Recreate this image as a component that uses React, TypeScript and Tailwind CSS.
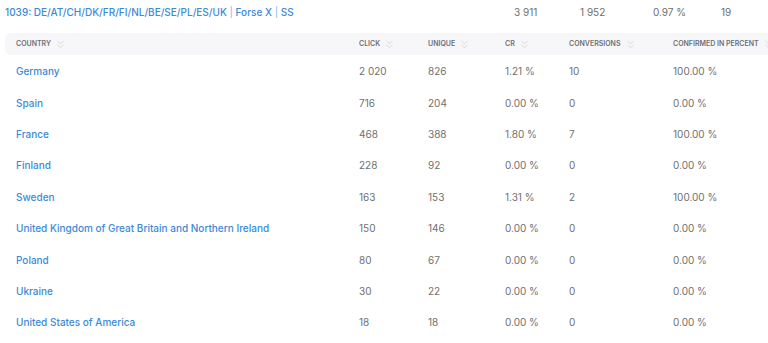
import { ChevronsDown } from 'lucide-react'

interface Row {
  country: string
  click: string
  unique: string
  cr: string
  conv: string
  confirmed: string
}

const rows: Row[] = [
  { country: 'Germany', click: '2 020', unique: '826', cr: '1.21 %', conv: '10', confirmed: '100.00 %' },
  { country: 'Spain', click: '716', unique: '204', cr: '0.00 %', conv: '0', confirmed: '0.00 %' },
  { country: 'France', click: '468', unique: '388', cr: '1.80 %', conv: '7', confirmed: '100.00 %' },
  { country: 'Finland', click: '228', unique: '92', cr: '0.00 %', conv: '0', confirmed: '0.00 %' },
  { country: 'Sweden', click: '163', unique: '153', cr: '1.31 %', conv: '2', confirmed: '100.00 %' },
  { country: 'United Kingdom of Great Britain and Northern Ireland', click: '150', unique: '146', cr: '0.00 %', conv: '0', confirmed: '0.00 %' },
  { country: 'Poland', click: '80', unique: '67', cr: '0.00 %', conv: '0', confirmed: '0.00 %' },
  { country: 'Ukraine', click: '30', unique: '22', cr: '0.00 %', conv: '0', confirmed: '0.00 %' },
  { country: 'United States of America', click: '18', unique: '18', cr: '0.00 %', conv: '0', confirmed: '0.00 %' },
]

const cols = 'grid grid-cols-[343px_69px_77px_64px_104px_1fr] items-center'

function Head({ label }: { label: string }) {
  return (
    <div className="flex items-center gap-[3px]">
      <span>{label}</span>
      <ChevronsDown size={13} strokeWidth={1.4} className="text-[#cfcfd6]" />
    </div>
  )
}

export default function App() {
  return (
    <div
      className="w-[768px] h-[343px] overflow-hidden bg-white"
      style={{ fontFamily: 'Inter, "Noto Sans", sans-serif' }}
    >
      <div className="w-[800px]">
        <div className="flex items-center h-[25px] pl-[5px] text-[10px]">
          <div className="w-[509px] font-medium text-[#3c8ad8]">
            1039: DE/AT/CH/DK/FR/FI/NL/BE/SE/PL/ES/UK <span className="text-[#9cc4ec]">|</span> Forse X{' '}
            <span className="text-[#9cc4ec]">|</span> SS
          </div>
          <div className="w-[66px] text-[#6e6e6e]">3 911</div>
          <div className="w-[73px] text-[#6e6e6e]">1 952</div>
          <div className="w-[68px] text-[#6e6e6e]">0.97 %</div>
          <div className="text-[#6e6e6e]">19</div>
        </div>

        <div className="mt-[8px] ml-[5px] rounded-[6px] bg-[#f7f7f9] h-[22px] pl-[11px] pt-[1px] text-[7px] font-semibold uppercase text-[#6f6f78]">
          <div className={`${cols} h-full`}>
            <Head label="Country" />
            <Head label="Click" />
            <Head label="Unique" />
            <Head label="CR" />
            <Head label="Conversions" />
            <Head label="Confirmed in percent" />
          </div>
        </div>

        <div className="ml-[5px] pl-[11px] pt-[1px]">
          {rows.map((r) => (
            <div key={r.country} className={`${cols} h-[31.4px] text-[10px] text-[#707070]`}>
              <div className="font-medium text-[#3c8ad8]">{r.country}</div>
              <div>{r.click}</div>
              <div>{r.unique}</div>
              <div>{r.cr}</div>
              <div>{r.conv}</div>
              <div>{r.confirmed}</div>
            </div>
          ))}
        </div>
      </div>
    </div>
  )
}
